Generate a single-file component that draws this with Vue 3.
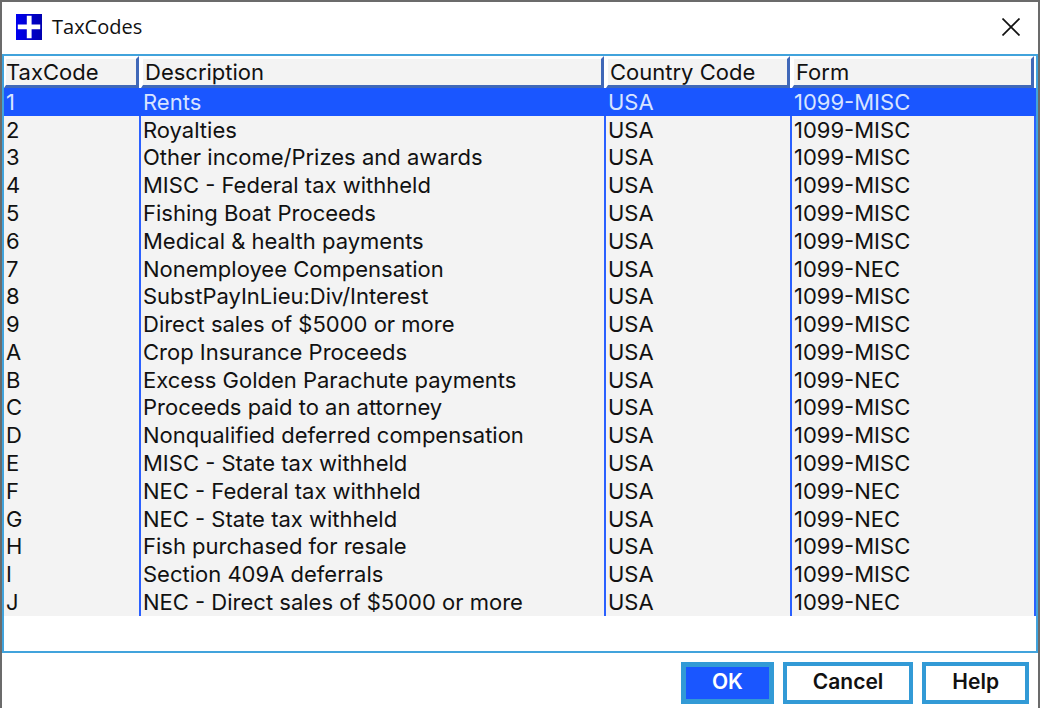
<template>
    <div class="dialog">
        <header class="title-bar">
            <svg class="app-icon" viewBox="0 0 26 26" aria-hidden="true">
                <defs>
                    <linearGradient id="iconFill" x1="0" y1="0" x2="1" y2="0">
                        <stop offset="0" stop-color="#0000f0" />
                        <stop offset="1" stop-color="#0000b0" />
                    </linearGradient>
                </defs>
                <rect width="26" height="26" fill="url(#iconFill)" />
                <path d="M10.8 1.8h4.8v8.8h8.6v4.6h-8.6v9h-4.8v-9H1.8v-4.6h9z" fill="#fff" />
            </svg>
            <h1 class="title">TaxCodes</h1>
            <button type="button" class="close" aria-label="Close">
                <svg viewBox="0 0 18 18" aria-hidden="true">
                    <path d="M0.5 0.5L17.5 17.5M17.5 0.5L0.5 17.5" fill="none" stroke="#111" stroke-width="1.7" />
                </svg>
            </button>
        </header>

        <main class="pane">
            <table class="grid">
                <colgroup>
                    <col class="col-code" />
                    <col class="col-description" />
                    <col class="col-country" />
                    <col />
                </colgroup>
                <thead>
                    <tr>
                        <th v-for="column in columns" :key="column" scope="col">
                            <div class="bevel">{{ column }}</div>
                        </th>
                    </tr>
                </thead>
                <tbody>
                    <tr v-for="row in rows" :key="row.code" :class="{ selected: row.code === selected }"
                        @click="selected = row.code">
                        <td>{{ row.code }}</td>
                        <td>{{ row.description }}</td>
                        <td>USA</td>
                        <td>{{ row.form }}</td>
                    </tr>
                </tbody>
            </table>
        </main>

        <footer class="actions">
            <button type="button" class="action primary">OK</button>
            <button type="button" class="action">Cancel</button>
            <button type="button" class="action">Help</button>
        </footer>
    </div>
</template>

<script setup>
import { ref } from 'vue';

const columns = ['TaxCode', 'Description', 'Country Code', 'Form'];

const rows = [
    { code: '1', description: 'Rents', form: '1099-MISC' },
    { code: '2', description: 'Royalties', form: '1099-MISC' },
    { code: '3', description: 'Other income/Prizes and awards', form: '1099-MISC' },
    { code: '4', description: 'MISC - Federal tax withheld', form: '1099-MISC' },
    { code: '5', description: 'Fishing Boat Proceeds', form: '1099-MISC' },
    { code: '6', description: 'Medical & health payments', form: '1099-MISC' },
    { code: '7', description: 'Nonemployee Compensation', form: '1099-NEC' },
    { code: '8', description: 'SubstPayInLieu:Div/Interest', form: '1099-MISC' },
    { code: '9', description: 'Direct sales of $5000 or more', form: '1099-MISC' },
    { code: 'A', description: 'Crop Insurance Proceeds', form: '1099-MISC' },
    { code: 'B', description: 'Excess Golden Parachute payments', form: '1099-NEC' },
    { code: 'C', description: 'Proceeds paid to an attorney', form: '1099-MISC' },
    { code: 'D', description: 'Nonqualified deferred compensation', form: '1099-MISC' },
    { code: 'E', description: 'MISC - State tax withheld', form: '1099-MISC' },
    { code: 'F', description: 'NEC - Federal tax withheld', form: '1099-NEC' },
    { code: 'G', description: 'NEC - State tax withheld', form: '1099-NEC' },
    { code: 'H', description: 'Fish purchased for resale', form: '1099-MISC' },
    { code: 'I', description: 'Section 409A deferrals', form: '1099-MISC' },
    { code: 'J', description: 'NEC - Direct sales of $5000 or more', form: '1099-NEC' },
];

const selected = ref('1');
</script>

<style>
body {
    background: #fff;
}
</style>

<style scoped>
.dialog {
    box-sizing: border-box;
    display: flex;
    flex-direction: column;
    height: 100vh;
    border: 2px solid #6b6b6b;
    border-bottom: none;
    background: #fff;
    color: #111;
    font-family: Inter, "Liberation Sans", sans-serif;
    font-size: 22px;
    line-height: 26px;
}

.title-bar {
    display: flex;
    align-items: center;
    flex: none;
    height: 52px;
    box-sizing: border-box;
    padding: 0 18px 3px 14px;
}

.app-icon {
    width: 26px;
    height: 26px;
}

.title {
    flex: 1;
    margin: 0 0 0 10px;
    font-family: "Open Sans", "Noto Sans", sans-serif;
    font-size: 20px;
    font-weight: 400;
}

.close {
    padding: 0;
    border: none;
    background: none;
    line-height: 0;
    cursor: pointer;
}

.close svg {
    width: 18px;
    height: 18px;
}

/* List area, with some empty space left under the last row */
.pane {
    flex: 1;
    min-height: 0;
    box-sizing: border-box;
    padding-bottom: 35px;
    border: 2px solid #41a3dc;
}

.grid {
    width: 100%;
    height: 100%;
    table-layout: fixed;
    border-collapse: separate;
    border-spacing: 0;
}

.col-code {
    width: 137px;
}

.col-description {
    width: 465px;
}

.col-country {
    width: 186px;
}

th {
    height: 32px;
    padding: 0;
    font-weight: 400;
    text-align: left;
}

/* Raised header button: light on top and left, dark on bottom and right */
.bevel {
    height: 26px;
    margin-right: 2px;
    border: 3px solid #fff;
    border-left-width: 2px;
    border-right-color: #4068b8;
    border-bottom-color: #4068b8;
    background: #f3f3f3;
}

th + th .bevel {
    padding-left: 2px;
}

td {
    padding: 0 0 0 2px;
    border-right: 2px solid #2a60ff;
    background: #f3f3f3;
    line-height: 24px;
    white-space: nowrap;
}

.selected td {
    border-color: #1a56ff;
    background: #1a56ff;
    color: #d8e4ff;
}

.actions {
    display: flex;
    flex: none;
    justify-content: flex-end;
    gap: 9px;
    padding: 9px 9px 4px;
}

.action {
    height: 42px;
    padding: 0 26px 2px;
    border: 4px solid #329ad6;
    background: #fff;
    color: #111;
    font: inherit;
    font-size: 21px;
    font-weight: 600;
    cursor: pointer;
}

.primary {
    border-width: 5px;
    background: #1a56ff;
    color: #fff;
}
</style>
